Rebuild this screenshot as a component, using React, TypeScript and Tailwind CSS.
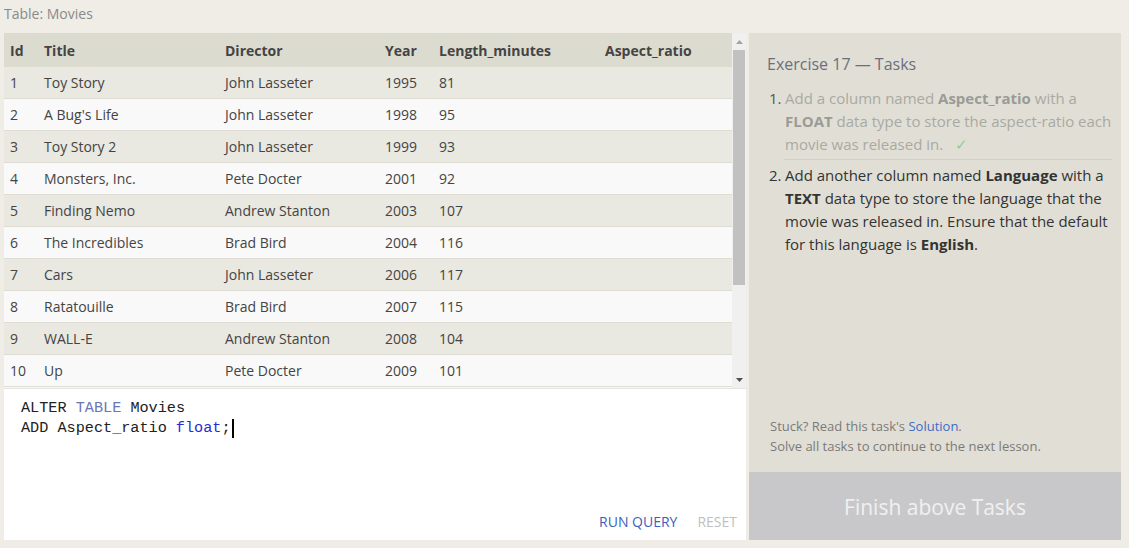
import React from "react"

const movies = [
  [1, "Toy Story", "John Lasseter", 1995, 81],
  [2, "A Bug's Life", "John Lasseter", 1998, 95],
  [3, "Toy Story 2", "John Lasseter", 1999, 93],
  [4, "Monsters, Inc.", "Pete Docter", 2001, 92],
  [5, "Finding Nemo", "Andrew Stanton", 2003, 107],
  [6, "The Incredibles", "Brad Bird", 2004, 116],
  [7, "Cars", "John Lasseter", 2006, 117],
  [8, "Ratatouille", "Brad Bird", 2007, 115],
  [9, "WALL-E", "Andrew Stanton", 2008, 104],
  [10, "Up", "Pete Docter", 2009, 101],
]

function Row({ m, i }: { m: (string | number)[]; i: number }) {
  return (
    <div
      className={
        "grid grid-cols-[40px_181px_160px_54px_166px_1fr] h-8 items-center border-b border-[#dedcd3] text-[14px] text-[#444] " +
        (i % 2 === 0 ? "bg-[#e9e8e1]" : "bg-[#f9f9f9]")
      }
    >
      <span className="pl-[6px]">{m[0]}</span>
      <span>{m[1]}</span>
      <span>{m[2]}</span>
      <span>{m[3]}</span>
      <span>{m[4]}</span>
      <span></span>
    </div>
  )
}

export default function App() {
  return (
    <div className="w-[1129px] h-[548px] bg-[#efede6] font-['Open_Sans',sans-serif] overflow-hidden">
      <div className="h-[33px] pl-[4px] pt-[3px] text-[14px] text-[#8a8a8a]">Table: Movies</div>
      <div className="flex gap-[3px] pl-[4px]">
        <div className="w-[742px] flex flex-col">
          <div className="flex h-[355px] bg-[#f9f9f9]">
            <div className="flex-1">
              <div className="grid grid-cols-[40px_181px_160px_54px_166px_1fr] h-[34px] items-center bg-[#dcdbd0] text-[14px] font-bold text-[#444]">
                <span className="pl-[6px]">Id</span>
                <span>Title</span>
                <span>Director</span>
                <span>Year</span>
                <span>Length_minutes</span>
                <span>Aspect_ratio</span>
              </div>
              {movies.map((m, i) => (
                <Row key={i} m={m} i={i} />
              ))}
            </div>
            <div className="w-[14px] bg-[#f0f0f0] flex flex-col items-center">
              <div className="h-[17px] flex items-center justify-center">
                <svg width="7" height="4" viewBox="0 0 7 4">
                  <path d="M0 4 L3.5 0 L7 4 Z" fill="#a3a3a3" />
                </svg>
              </div>
              <div className="w-[12px] h-[235px] bg-[#c1c1c1]"></div>
              <div className="flex-1"></div>
              <div className="h-[17px] flex items-center justify-center">
                <svg width="7" height="4" viewBox="0 0 7 4">
                  <path d="M0 0 L7 0 L3.5 4 Z" fill="#505050" />
                </svg>
              </div>
            </div>
          </div>
          <div className="h-[152px] bg-white border-t border-[#e4e4e4] flex flex-col">
            <div className="pt-[9px] pl-[17px] font-['Liberation_Mono',monospace] text-[15.2px] leading-[20px] text-[#222]">
              <div>
                ALTER <span className="text-[#6a77b5]">TABLE</span> Movies
              </div>
              <div className="flex items-center">
                ADD Aspect_ratio <span className="text-[#2a2ad6] ml-[9px]">float</span>;
                <span className="inline-block w-[2px] h-[19px] bg-black ml-[1px]"></span>
              </div>
            </div>
            <div className="flex-1"></div>
            <div className="flex justify-end gap-5 pr-[9px] pb-[8px] text-[14px]">
              <span className="text-[#3a5fbd]">RUN QUERY</span>
              <span className="text-[#c0c0c0]">RESET</span>
            </div>
          </div>
        </div>
        <div className="w-[372px] flex flex-col h-[507px]">
          <div className="flex-1 bg-[#e1dfd5] pl-[18px] pr-[4px] flex flex-col">
            <div className="pt-[19px] text-[16px] text-[#6b6e7d]">Exercise 17 — Tasks</div>
            <ol className="mt-[11px] text-[15px] leading-[23px]">
              <li className="ml-[2px] text-[#a9a9a3]">
                <div className="flex">
                  <span className="w-[16px] shrink-0 text-[#555]">1.</span>
                  <span>
                    Add a column named <b className="text-[#9b9b96]">Aspect_ratio</b> with a{" "}
                    <b className="text-[#9b9b96]">FLOAT</b> data type to store the aspect-ratio each movie was released in.
                    <span className="text-[#8fcf8f] ml-[12px]">✓</span>
                  </span>
                </div>
                <div className="ml-[15px] mr-[5px] mt-[3px] border-b border-[#d2d0c6]"></div>
              </li>
              <li className="flex pt-[4px] ml-[2px] text-[#333]">
                <span className="w-[16px] shrink-0">2.</span>
                <span className="pr-[6px]">
                  Add another column named <b>Language</b> with a <b>TEXT</b> data type to store the language that the
                  movie was released in. Ensure that the default for this language is <b>English</b>.
                </span>
              </li>
            </ol>
            <div className="flex-1"></div>
            <div className="pb-[16px] pl-[3px] text-[13px] leading-[20px] text-[#7a7a7a]">
              <div>
                Stuck? Read this task's <span className="text-[#3b6cc4]">Solution</span>.
              </div>
              <div>Solve all tasks to continue to the next lesson.</div>
            </div>
          </div>
          <div className="h-[68px] bg-[#c8c8ca] flex items-center justify-center pt-[4px] text-[21px] text-[#f0f0f0]">
            Finish above Tasks
          </div>
        </div>
      </div>
    </div>
  )
}
